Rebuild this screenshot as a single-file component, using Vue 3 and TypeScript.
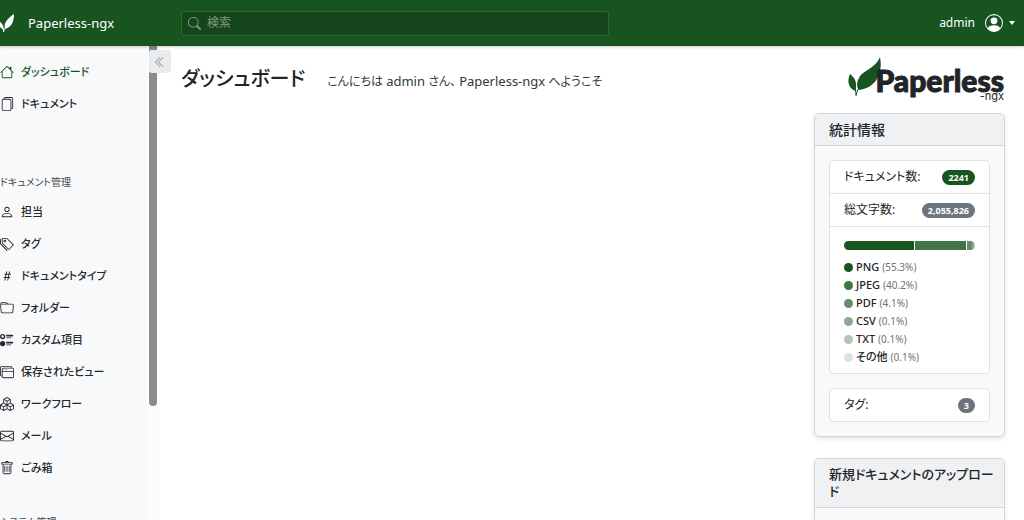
<script setup lang="ts">
import { ref } from 'vue'

interface NavItem {
  label: string
  paths: string[]
  active?: boolean
}

interface FileType {
  name: string
  percent: number
  width: number
}

const query = ref('')

const mainItems: NavItem[] = [
  {
    label: 'ダッシュボード',
    active: true,
    paths: ['M8.707 1.5a1 1 0 0 0-1.414 0L.646 8.146a.5.5 0 0 0 .708.708L2 8.207V13.5A1.5 1.5 0 0 0 3.5 15h9a1.5 1.5 0 0 0 1.5-1.5V8.207l.646.647a.5.5 0 0 0 .708-.708L13 5.793V2.5a.5.5 0 0 0-.5-.5h-1a.5.5 0 0 0-.5.5v1.293zM13 7.207V13.5a.5.5 0 0 1-.5.5h-9a.5.5 0 0 1-.5-.5V7.207l5-5z'],
  },
  {
    label: 'ドキュメント',
    paths: ['M13 0H6a2 2 0 0 0-2 2 2 2 0 0 0-2 2v10a2 2 0 0 0 2 2h7a2 2 0 0 0 2-2 2 2 0 0 0 2-2V2a2 2 0 0 0-2-2m0 13V4a2 2 0 0 0-2-2H5a1 1 0 0 1 1-1h7a1 1 0 0 1 1 1v10a1 1 0 0 1-1 1M3 4a1 1 0 0 1 1-1h7a1 1 0 0 1 1 1v10a1 1 0 0 1-1 1H4a1 1 0 0 1-1-1z'],
  },
]

const manageItems: NavItem[] = [
  {
    label: '担当',
    paths: ['M8 8a3 3 0 1 0 0-6 3 3 0 0 0 0 6m2-3a2 2 0 1 1-4 0 2 2 0 0 1 4 0m4 8c0 1-1 1-1 1H3s-1 0-1-1 1-4 6-4 6 3 6 4m-1-.004c-.001-.246-.154-.986-.832-1.664C11.516 10.68 10.289 10 8 10s-3.516.68-4.168 1.332c-.678.678-.83 1.418-.832 1.664z'],
  },
  {
    label: 'タグ',
    paths: [
      'M3 2v4.586l7 7L14.586 9l-7-7zM2 2a1 1 0 0 1 1-1h4.586a1 1 0 0 1 .707.293l7 7a1 1 0 0 1 0 1.414l-4.586 4.586a1 1 0 0 1-1.414 0l-7-7A1 1 0 0 1 2 6.586z',
      'M5.5 5a.5.5 0 1 1 0-1 .5.5 0 0 1 0 1m0 1a1.5 1.5 0 1 0 0-3 1.5 1.5 0 0 0 0 3M1 7.086a1 1 0 0 0 .293.707L8.75 15.25l-.043.043a1 1 0 0 1-1.414 0l-7-7A1 1 0 0 1 0 7.586V3a1 1 0 0 1 1-1z',
    ],
  },
  {
    label: 'ドキュメントタイプ',
    paths: ['M8.39 12.648a1 1 0 0 0-.015.18c0 .305.21.508.5.508.266 0 .492-.172.555-.477l.554-2.703h1.204c.421 0 .617-.234.617-.547 0-.312-.188-.53-.617-.53h-.985l.516-2.524h1.265c.43 0 .618-.227.618-.547 0-.313-.188-.524-.618-.524h-1.046l.476-2.304a1 1 0 0 0 .016-.164.51.51 0 0 0-.516-.516.54.54 0 0 0-.539.43l-.523 2.554H7.617l.477-2.304c.008-.04.015-.118.015-.164a.51.51 0 0 0-.523-.516.54.54 0 0 0-.531.43L6.53 5.484H5.414c-.43 0-.617.22-.617.532s.187.539.617.539h.906l-.515 2.523H4.609c-.421 0-.609.219-.609.531s.188.547.61.547h.976l-.516 2.492c-.008.04-.015.125-.015.18 0 .305.21.508.5.508.265 0 .492-.172.554-.477l.555-2.703h2.242zm-1-6.109h2.266l-.515 2.563H6.859l.532-2.563z'],
  },
  {
    label: 'フォルダー',
    paths: ['M.54 3.87.5 3a2 2 0 0 1 2-2h3.672a2 2 0 0 1 1.414.586l.828.828A2 2 0 0 0 9.828 3h3.982a2 2 0 0 1 1.992 2.181l-.637 7A2 2 0 0 1 13.174 14H2.826a2 2 0 0 1-1.991-1.819l-.637-7a2 2 0 0 1 .342-1.31zM2.19 4a1 1 0 0 0-.996 1.09l.637 7a1 1 0 0 0 .995.91h10.348a1 1 0 0 0 .995-.91l.637-7A1 1 0 0 0 13.81 4zm4.69-1.707A1 1 0 0 0 6.172 2H2.5a1 1 0 0 0-1 .981l.006.139q.323-.119.684-.12h5.396z'],
  },
  {
    label: 'カスタム項目',
    paths: ['M7 2.5a.5.5 0 0 1 .5-.5h7a.5.5 0 0 1 .5.5v1a.5.5 0 0 1-.5.5h-7a.5.5 0 0 1-.5-.5zM0 12a3 3 0 1 1 6 0 3 3 0 0 1-6 0m7-1.5a.5.5 0 0 1 .5-.5h7a.5.5 0 0 1 .5.5v1a.5.5 0 0 1-.5.5h-7a.5.5 0 0 1-.5-.5zm0-5a.5.5 0 0 1 .5-.5h5a.5.5 0 0 1 0 1h-5a.5.5 0 0 1-.5-.5m0 8a.5.5 0 0 1 .5-.5h5a.5.5 0 0 1 0 1h-5a.5.5 0 0 1-.5-.5M3 1a3 3 0 1 0 0 6 3 3 0 0 0 0-6m0 4.5a1.5 1.5 0 1 1 0-3 1.5 1.5 0 0 1 0 3'],
  },
  {
    label: '保存されたビュー',
    paths: [
      'M4.5 6a.5.5 0 1 0 0-1 .5.5 0 0 0 0 1M6 6a.5.5 0 1 0 0-1 .5.5 0 0 0 0 1m2-.5a.5.5 0 1 1-1 0 .5.5 0 0 1 1 0',
      'M12 1a2 2 0 0 1 2 2 2 2 0 0 1 2 2v8a2 2 0 0 1-2 2H4a2 2 0 0 1-2-2 2 2 0 0 1-2-2V3a2 2 0 0 1 2-2zM2 12V5a2 2 0 0 1 2-2h9a1 1 0 0 0-1-1H2a1 1 0 0 0-1 1v8a1 1 0 0 0 1 1m1-4v5a1 1 0 0 0 1 1h10a1 1 0 0 0 1-1V8zm12-1V5a1 1 0 0 0-1-1H4a1 1 0 0 0-1 1v2z',
    ],
  },
  {
    label: 'ワークフロー',
    paths: ['M7.752.066a.5.5 0 0 1 .496 0l3.75 2.143a.5.5 0 0 1 .252.434v3.995l3.498 2A.5.5 0 0 1 16 9.07v4.286a.5.5 0 0 1-.252.434l-3.75 2.143a.5.5 0 0 1-.496 0l-3.502-2-3.502 2.001a.5.5 0 0 1-.496 0l-3.75-2.143A.5.5 0 0 1 0 13.357V9.071a.5.5 0 0 1 .252-.434L3.75 6.638V2.643a.5.5 0 0 1 .252-.434zM4.25 7.504 1.508 9.071l2.742 1.567 2.742-1.567zM7.5 9.933l-2.75 1.571v3.134l2.75-1.571zm1 3.134 2.75 1.571v-3.134L8.5 9.933zm.508-3.996 2.742 1.567 2.742-1.567-2.742-1.567zm2.242-2.433V3.504L8.5 5.076V8.21zM7.5 8.21V5.076L4.75 3.504v3.134zM5.258 2.643 8 4.21l2.742-1.567L8 1.076zM15 9.933l-2.75 1.571v3.134L15 13.067zM3.75 14.638v-3.134L1 9.933v3.134z'],
  },
  {
    label: 'メール',
    paths: ['M0 4a2 2 0 0 1 2-2h12a2 2 0 0 1 2 2v8a2 2 0 0 1-2 2H2a2 2 0 0 1-2-2zm2-1a1 1 0 0 0-1 1v.217l7 4.2 7-4.2V4a1 1 0 0 0-1-1zm13 2.383-4.708 2.825L15 11.105zm-.034 6.876-5.64-3.471L8 9.583l-1.326-.795-5.64 3.47A1 1 0 0 0 2 13h12a1 1 0 0 0 .966-.741M1 11.105l4.708-2.897L1 5.383z'],
  },
  {
    label: 'ごみ箱',
    paths: [
      'M5.5 5.5A.5.5 0 0 1 6 6v6a.5.5 0 0 1-1 0V6a.5.5 0 0 1 .5-.5m2.5 0a.5.5 0 0 1 .5.5v6a.5.5 0 0 1-1 0V6a.5.5 0 0 1 .5-.5m3 .5a.5.5 0 0 0-1 0v6a.5.5 0 0 0 1 0z',
      'M14.5 3a1 1 0 0 1-1 1H13v9a2 2 0 0 1-2 2H5a2 2 0 0 1-2-2V4h-.5a1 1 0 0 1-1-1V2a1 1 0 0 1 1-1H6a1 1 0 0 1 1-1h2a1 1 0 0 1 1 1h3.5a1 1 0 0 1 1 1zM4.118 4 4 4.059V13a1 1 0 0 0 1 1h6a1 1 0 0 0 1-1V4.059L11.882 4zM2.5 3h11V2h-11z',
    ],
  },
]

const navGroups = [
  { title: '', items: mainItems },
  { title: 'ドキュメント管理', items: manageItems },
  { title: 'システム管理', items: [] as NavItem[] },
]

const fileTypes: FileType[] = [
  { name: 'PNG', percent: 55.3, width: 54 },
  { name: 'JPEG', percent: 40.2, width: 40 },
  { name: 'PDF', percent: 4.1, width: 4 },
  { name: 'CSV', percent: 0.1, width: 1 },
  { name: 'TXT', percent: 0.1, width: 1 },
  { name: 'その他', percent: 0.1, width: 0 },
]
const shades = ['#17541f', '#407346', '#648e69', '#8baa8f', '#b2c6b4', '#dae4db']
</script>

<template>
  <div class="app">
    <header class="topbar">
      <a class="brand" href="#">
        <svg class="brand-leaf" viewBox="0 0 14 18" aria-hidden="true">
          <path d="M14 0C14 7 12 13 5 15 3 9 8 4 14 0Z" />
          <path d="M0 8C2 9 4 12 3.500 16 2 15 1 14 0 13Z" />
          <path d="M3 15 5 14 4 18 3 18Z" />
        </svg>
        <span>Paperless-ngx</span>
      </a>
      <form class="search" role="search" @submit.prevent>
        <svg class="search-icon" viewBox="0 0 16 16" aria-hidden="true">
          <path d="M11.742 10.344a6.5 6.5 0 1 0-1.397 1.398h-.001q.044.06.098.115l3.85 3.85a1 1 0 0 0 1.415-1.414l-3.85-3.85a1 1 0 0 0-.115-.1zM12 6.5a5.5 5.5 0 1 1-11 0 5.5 5.5 0 0 1 11 0" />
        </svg>
        <input v-model="query" type="text" placeholder="検索" aria-label="検索" />
      </form>
      <button class="user" type="button">
        <span>admin</span>
        <svg class="avatar" viewBox="0 0 16 16" aria-hidden="true">
          <path d="M11 6a3 3 0 1 1-6 0 3 3 0 0 1 6 0" />
          <path fill-rule="evenodd" d="M0 8a8 8 0 1 1 16 0A8 8 0 0 1 0 8m8-7a7 7 0 0 0-5.468 11.37C3.242 11.226 4.805 10 8 10s4.757 1.225 5.468 2.37A7 7 0 0 0 8 1" />
        </svg>
        <i class="caret"></i>
      </button>
    </header>

    <div class="body">
      <aside class="sidebar">
        <nav class="nav">
          <section v-for="(group, g) in navGroups" :key="g" class="group">
            <h6 v-if="group.title">{{ group.title }}</h6>
            <ul v-if="group.items.length">
              <li v-for="item in group.items" :key="item.label">
                <a href="#" :class="{ active: item.active }">
                  <svg viewBox="0 0 16 16" aria-hidden="true">
                    <path v-for="(d, i) in item.paths" :key="i" :d="d" />
                  </svg>
                  <span>{{ item.label }}</span>
                </a>
              </li>
            </ul>
          </section>
        </nav>
        <div class="track"><div class="thumb"></div></div>
        <button class="collapse" type="button" aria-label="«">
          <svg viewBox="0 0 16 16" aria-hidden="true">
            <path d="M8.354 1.646a.5.5 0 0 1 0 .708L2.707 8l5.647 5.646a.5.5 0 0 1-.708.708l-6-6a.5.5 0 0 1 0-.708l6-6a.5.5 0 0 1 .708 0" />
            <path d="M12.354 1.646a.5.5 0 0 1 0 .708L6.707 8l5.647 5.646a.5.5 0 0 1-.708.708l-6-6a.5.5 0 0 1 0-.708l6-6a.5.5 0 0 1 .708 0" />
          </svg>
        </button>
      </aside>

      <main class="content">
        <div class="heading">
          <h1>ダッシュボード</h1>
          <p>こんにちは <span>admin</span> さん、 <span>Paperless-ngx</span> へようこそ</p>
        </div>

        <div class="side">
          <div class="logo">
            <svg class="logo-leaf" viewBox="0 0 34 40" aria-hidden="true">
              <path d="M32 0C35 15 29 31 11 33 8 30 9 24 11 21 15 13 27 12 32 0Z" />
              <path d="M2 17C8 22 9 26 7.500 34 0 31-1 24 2 17Z" />
              <path class="stem" d="M8 39C8.500 34 12 28 19 21M8 38C8 34 7 31 5 27" />
            </svg>
            <div class="wordmark">
              <span class="word">Paperless</span>
              <span class="suffix">-ngx</span>
            </div>
          </div>

          <section class="card">
            <h2>統計情報</h2>
            <div class="card-body">
              <div class="list">
                <div class="row"><span>ドキュメント数:</span><span class="badge primary">2241</span></div>
                <div class="row"><span>総文字数:</span><span class="badge">2,055,826</span></div>
                <div class="types">
                  <div class="bar">
                    <div
                      v-for="(type, i) in fileTypes"
                      :key="type.name"
                      class="segment"
                      :style="{ flexGrow: type.width, background: shades[i] }"
                    ></div>
                  </div>
                  <ul>
                    <li v-for="(type, i) in fileTypes" :key="type.name">
                      <i class="dot" :style="{ background: shades[i] }"></i>
                      <b>{{ type.name }}</b>
                      <span>({{ type.percent.toFixed(1) }}%)</span>
                    </li>
                  </ul>
                </div>
              </div>
              <div class="list">
                <div class="row"><span>タグ:</span><span class="badge">3</span></div>
              </div>
            </div>
          </section>

          <section class="card">
            <h2 class="long">新規ドキュメントのアップロード</h2>
            <div class="card-body upload"></div>
          </section>
        </div>
      </main>
    </div>
  </div>
</template>

<style>
html,
body {
  margin: 0;
  height: 100%;
  overflow: hidden;
}
#app {
  height: 100%;
}
</style>

<style scoped>
.app {
  height: 100%;
  display: flex;
  flex-direction: column;
  overflow: hidden;
  background: #fff;
  color: #212529;
  font-family: "Noto Sans", "Noto Sans CJK JP", sans-serif;
  font-size: 13px;
  line-height: 20px;
  font-feature-settings: "palt";
}
.app * {
  box-sizing: border-box;
}
svg {
  fill: currentColor;
  flex: none;
  display: block;
}
ul {
  list-style: none;
  margin: 0;
  padding: 0;
}
h1,
h2,
h6,
p {
  margin: 0;
}
a {
  color: inherit;
  text-decoration: none;
}
button {
  border: 0;
  padding: 0;
  font: inherit;
  color: inherit;
}

.topbar {
  flex: none;
  height: 46px;
  display: flex;
  align-items: center;
  background: #17541f;
  color: #fff;
  box-shadow: 0 1px 3px rgba(0, 0, 0, 0.2);
  position: relative;
  z-index: 2;
}
.brand {
  width: 181px;
  display: flex;
  align-items: center;
  gap: 14px;
}
.brand-leaf {
  width: 14px;
  height: 18px;
}
.search {
  flex: 0 1 428px;
  height: 25px;
  display: flex;
  align-items: center;
  gap: 6px;
  padding-left: 6px;
  border: 1px solid #2f6736;
  border-radius: 3px;
  background: #15461b;
}
.search-icon {
  width: 13px;
  height: 13px;
  color: #8aa38d;
}
.search input {
  flex: 1;
  min-width: 0;
  border: 0;
  outline: 0;
  padding: 0;
  background: transparent;
  color: #fff;
  font: inherit;
  font-size: 12px;
}
.search input::placeholder {
  color: #7d997f;
  opacity: 1;
}
.user {
  margin-left: auto;
  margin-right: 9px;
  display: flex;
  align-items: center;
  background: transparent;
  font-size: 12px;
}
.avatar {
  width: 18px;
  height: 18px;
  margin: 0 6px 0 10px;
}
.caret {
  border: 3px solid transparent;
  border-top: 4px solid currentColor;
  border-bottom: 0;
}

.body {
  flex: 1;
  min-height: 0;
  display: flex;
}
.sidebar {
  position: relative;
  flex: none;
  width: 160px;
  display: flex;
  background: #f8f9fb;
}
.nav {
  flex: 1;
  min-width: 0;
  overflow: hidden;
  padding-top: 10px;
  display: flex;
  flex-direction: column;
  gap: 28px;
}
.group:first-child {
  padding-bottom: 24px;
}
.group h6 {
  font-size: 10px;
  font-weight: 400;
  line-height: 20px;
  color: #45494d;
  padding-bottom: 4px;
  white-space: nowrap;
}
.nav a {
  height: 32px;
  display: flex;
  align-items: center;
  gap: 7px;
  font-size: 11px;
  font-weight: 500;
  color: #26292c;
  white-space: nowrap;
}
.nav a svg {
  width: 14px;
  height: 14px;
}
.nav a.active {
  color: #17541f;
}
.track {
  flex: none;
  width: 13px;
  padding: 0 3px 0 2px;
  background: #fcfcfc;
}
.thumb {
  height: 76%;
  border-radius: 0 0 4px 4px;
  background: #8b8b8b;
}
.collapse {
  position: absolute;
  top: 4px;
  right: -11px;
  width: 22px;
  height: 23px;
  display: grid;
  place-items: center;
  border-radius: 3px;
  background: #e9ecef;
  color: #8a9097;
}
.collapse svg {
  width: 12px;
  height: 12px;
}

.content {
  flex: 1;
  min-width: 0;
  display: flex;
  justify-content: space-between;
  align-items: flex-start;
  padding: 11px 19px 0 21px;
}
.heading {
  display: flex;
  align-items: baseline;
  gap: 22px;
  padding-top: 7px;
  white-space: nowrap;
}
.heading h1 {
  font-size: 20px;
  font-weight: 500;
  line-height: 30px;
}
.heading p {
  font-size: 12px;
  color: #32373b;
}
.heading p span {
  font-size: 13px;
}

.side {
  width: 191px;
  display: flex;
  flex-direction: column;
  gap: 21px;
}
.logo {
  display: flex;
  justify-content: flex-end;
  height: 56px;
  margin-bottom: -21px;
  padding-right: 1px;
}
.logo-leaf {
  width: 34px;
  height: 40px;
  color: #17541f;
  margin-right: -6px;
}
.stem {
  fill: none;
  stroke: currentColor;
  stroke-width: 1;
}
.wordmark {
  display: flex;
  flex-direction: column;
  align-items: flex-end;
  padding-top: 11px;
}
.word {
  font-family: Lato, sans-serif;
  font-size: 30px;
  font-weight: 900;
  line-height: 24px;
  -webkit-text-stroke: 1px currentColor;
}
.suffix {
  font-family: Inter, sans-serif;
  font-size: 11px;
  line-height: 8px;
}

.card {
  border: 1px solid #d3d6d9;
  border-radius: 5px;
  background: #f8f9fb;
  box-shadow: 0 2px 4px rgba(0, 0, 0, 0.1);
}
.card h2 {
  padding: 7px 14px;
  border-bottom: 1px solid #d3d6d9;
  border-radius: 4px 4px 0 0;
  background: #f0f1f3;
  font-size: 14px;
  font-weight: 500;
  line-height: 17px;
}
.card h2.long {
  padding-right: 7px;
  font-size: 13px;
  line-break: anywhere;
}
.card-body {
  padding: 14px;
  display: flex;
  flex-direction: column;
  gap: 14px;
}
.upload {
  height: 100px;
}
.list {
  border: 1px solid #dee2e6;
  border-radius: 5px;
  background: #fff;
}
.row {
  display: flex;
  align-items: center;
  justify-content: space-between;
  height: 33px;
  padding: 0 14px;
  border-bottom: 1px solid #dee2e6;
  font-size: 12px;
}
.row:last-child {
  height: 32px;
  border-bottom: 0;
}
.badge {
  padding: 0 6px;
  border-radius: 8px;
  background: #6c757d;
  color: #fff;
  font-size: 9px;
  font-weight: 700;
  line-height: 15px;
}
.badge.primary {
  background: #17541f;
}
.types {
  padding: 14px 14px 7px;
}
.bar {
  display: flex;
  height: 9px;
  border-radius: 5px;
  overflow: hidden;
  margin-bottom: 8px;
}
.segment {
  flex: 1 1 0;
}
.segment:nth-child(-n + 2) {
  border-right: 1px solid #fff;
}
.types li {
  display: flex;
  align-items: center;
  gap: 3px;
  font-size: 10px;
  line-height: 18px;
}
.types b {
  font-size: 11px;
  font-weight: 500;
}
.types span {
  color: #6c757d;
}
.dot {
  width: 9px;
  height: 9px;
  border-radius: 50%;
}
</style>
